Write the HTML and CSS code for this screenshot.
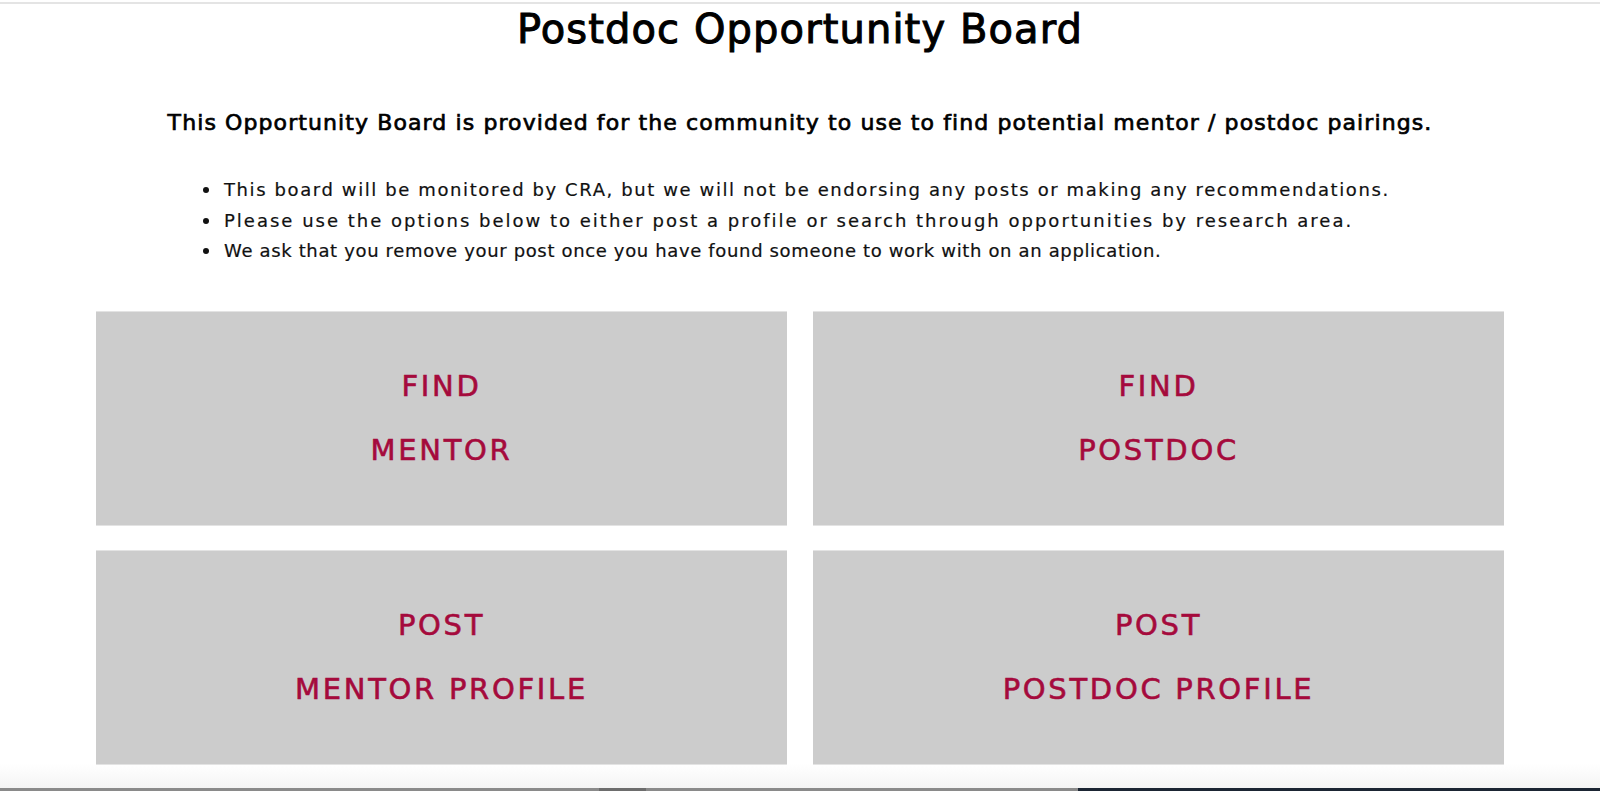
FILE: index.html
```html
<!DOCTYPE html>
<html lang="en">
<head>
<meta charset="utf-8">
<title>Postdoc Opportunity Board</title>
<link rel="stylesheet" href="styles.css">
</head>
<body>
<div class="topline"></div>
<main class="page">
  <h1 class="title">Postdoc Opportunity Board</h1>
  <h3 class="lead">This Opportunity Board is provided for the community to use to find potential mentor / postdoc pairings.</h3>
  <ul class="notes">
    <li>This board will be monitored by CRA, but we will not be endorsing any posts or making any recommendations.</li>
    <li>Please use the options below to either post a profile or search through opportunities by research area.</li>
    <li>We ask that you remove your post once you have found someone to work with on an application.</li>
  </ul>
  <div class="cards">
    <a class="card" href="#"><span>FIND</span><span>MENTOR</span></a>
    <a class="card" href="#"><span>FIND</span><span>POSTDOC</span></a>
    <a class="card" href="#"><span>POST</span><span>MENTOR PROFILE</span></a>
    <a class="card" href="#"><span>POST</span><span>POSTDOC PROFILE</span></a>
  </div>
</main>
<div class="fade"></div>
<div class="bottombar"><div class="seg-a"></div><div class="seg-b"></div><div class="seg-c"></div><div class="seg-d"></div></div>
</body>
</html>
```

FILE: styles.css
```css
html, body {
  margin: 0;
  padding: 0;
  background: #ffffff;
}
body {
  font-family: "DejaVu Sans", "Noto Sans", sans-serif;
  color: #000;
  padding-top: 2px;
  height: 791px;
  overflow: hidden;
  box-sizing: border-box;
}
.topline {
  height: 2px;
  background: #e4e4e4;
}
.page {
  display: flex;
  flex-direction: column;
  align-items: center;
}
.title {
  margin: 1px 0 0;
  font-size: 40px;
  line-height: 48px;
  font-weight: normal;
  letter-spacing: 1.1px;
  -webkit-text-stroke: 1px #000;
}
.lead {
  margin: 57px 0 0;
  font-size: 22px;
  line-height: 26px;
  font-weight: normal;
  -webkit-text-stroke: 0.7px #000;
  letter-spacing: 1.1px;
}
.notes {
  align-self: stretch;
  list-style: none;
  margin: 39px 0 0;
  padding: 0 0 0 203px;
  font-size: 18px;
  line-height: 30.5px;
  color: #111;
  letter-spacing: 1.6px;
  -webkit-text-stroke: 0.2px #111;
}
.notes li {
  display: flex;
  align-items: center;
}
.notes li:nth-child(2) {
  letter-spacing: 2px;
}
.notes li:nth-child(3) {
  letter-spacing: 0.65px;
}
.notes li::before {
  content: "";
  width: 6px;
  height: 6px;
  border-radius: 50%;
  background: #111;
  margin-right: 15px;
  flex: none;
}
.cards {
  margin-top: 45px;
  width: 1408px;
  display: grid;
  grid-template-columns: 1fr 1fr;
  grid-auto-rows: 213px;
  gap: 26px;
}
.card {
  background: #cccccc;
  box-shadow: 0 -1px 0 #e3e3e3, 0 1px 0 #e3e3e3;
  display: flex;
  flex-direction: column;
  align-items: center;
  justify-content: center;
  gap: 32px;
  text-decoration: none;
  color: #a50a3c;
  font-size: 29px;
  line-height: 32px;
  letter-spacing: 2.7px;
  -webkit-text-stroke: 0.6px #a50a3c;
}
.fade {
  height: 24px;
  background: linear-gradient(#ffffff, #f4f4f4);
}
.bottombar {
  height: 3px;
  display: flex;
}
.seg-a { width: 599px; background: #8a8a8a; }
.seg-b { width: 47px; background: #6d6d6d; }
.seg-c { width: 432px; background: #8a8a8a; }
.seg-d { flex: 1; background: #1b2533; }
```
